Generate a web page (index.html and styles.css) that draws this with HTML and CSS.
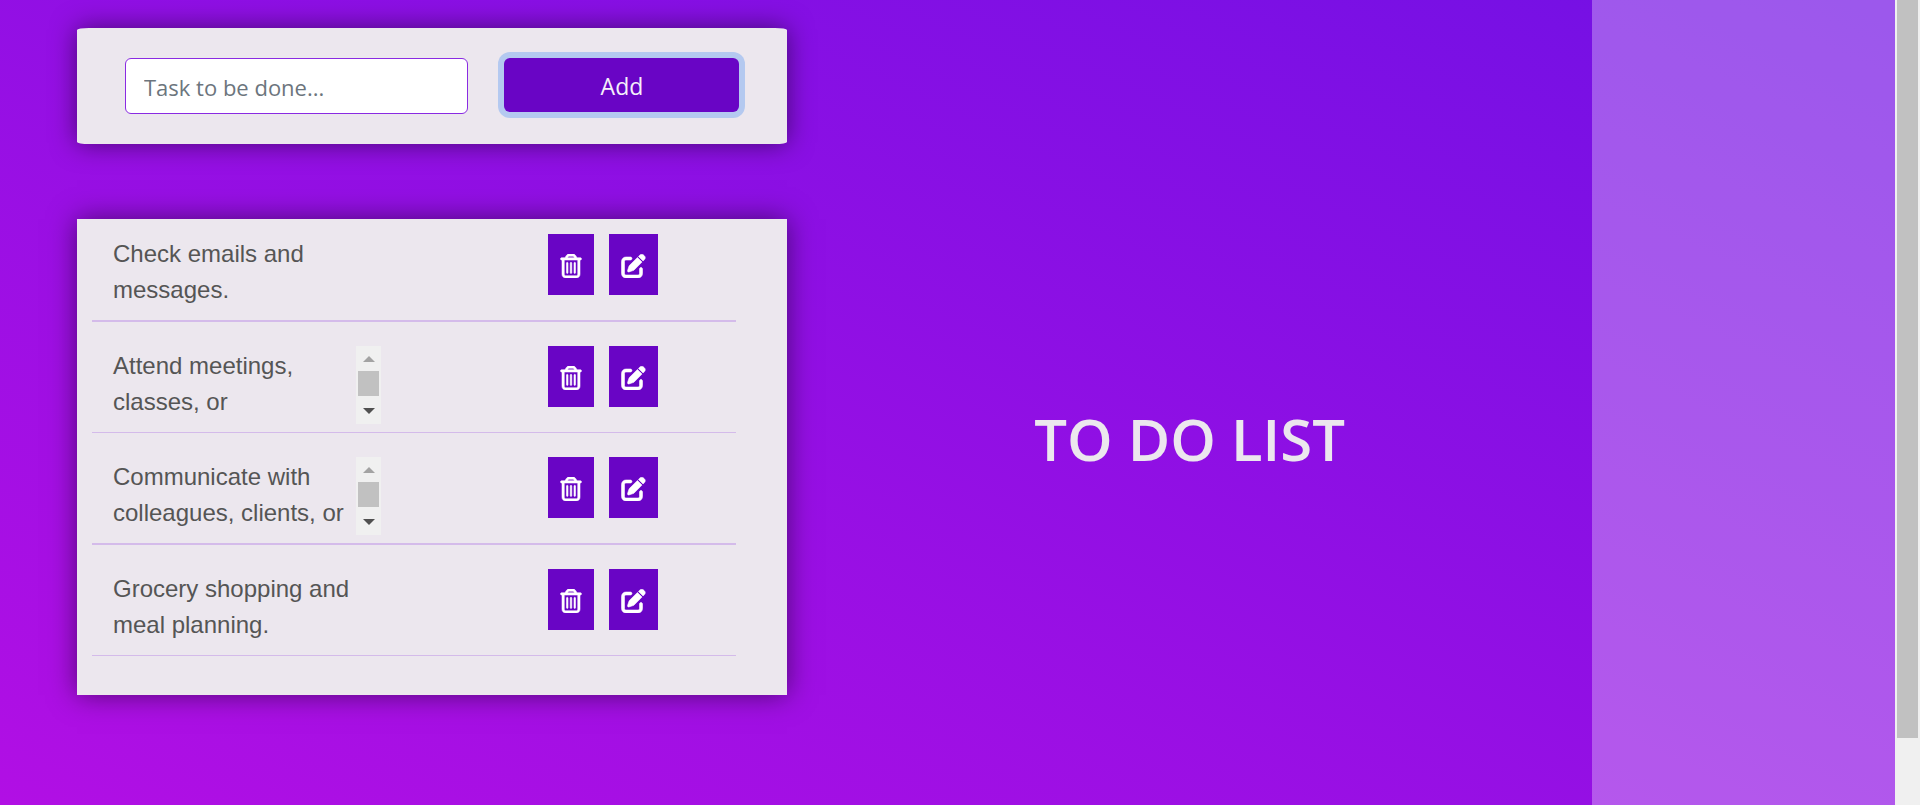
FILE: index.html
```html
<!DOCTYPE html>
<html lang="en">
<head>
<meta charset="utf-8">
<title>To Do List</title>
<link rel="stylesheet" href="styles.css">
</head>
<body>
<svg class="sprite" aria-hidden="true">
  <symbol id="trash" viewBox="0 0 448 512"><path d="M170.5 51.6L151.5 80h145l-19-28.4c-1.5-2.2-4-3.6-6.7-3.6H177.1c-2.7 0-5.2 1.3-6.7 3.6zm147-26.6L354.2 80H368h48 8c13.3 0 24 10.7 24 24s-10.7 24-24 24h-8V432c0 44.2-35.8 80-80 80H112c-44.2 0-80-35.8-80-80V128H24c-13.3 0-24-10.7-24-24S10.7 80 24 80h8H80 93.8l36.7-55.1C140.9 9.4 158.4 0 177.1 0h93.7c18.7 0 36.2 9.4 46.6 24.9zM80 128V432c0 17.7 14.3 32 32 32H336c17.7 0 32-14.3 32-32V128H80zm80 64V400c0 8.800-7.200 16-16 16s-16-7.200-16-16V192c0-8.800 7.200-16 16-16s16 7.200 16 16zm80 0V400c0 8.800-7.200 16-16 16s-16-7.200-16-16V192c0-8.800 7.200-16 16-16s16 7.200 16 16zm80 0V400c0 8.800-7.200 16-16 16s-16-7.200-16-16V192c0-8.800 7.200-16 16-16s16 7.200 16 16z"/></symbol>
  <symbol id="edit" viewBox="0 0 512 512"><path d="M471.6 21.7c-21.9-21.9-57.3-21.9-79.2 0L362.3 51.7l97.9 97.9 30.1-30.1c21.9-21.9 21.9-57.3 0-79.2L471.6 21.7zm-299.2 220c-6.1 6.1-10.8 13.600-13.500 21.900l-29.600 88.800c-2.900 8.600-.6 18.100 5.800 24.600s15.900 8.700 24.600 5.800l88.800-29.600c8.200-2.700 15.700-7.400 21.900-13.500L437.700 172.300 339.700 74.300 172.400 241.700zM96 64C43 64 0 107 0 160V416c0 53 43 96 96 96H352c53 0 96-43 96-96V320c0-17.700-14.300-32-32-32s-32 14.300-32 32v96c0 17.700-14.300 32-32 32H96c-17.700 0-32-14.300-32-32V160c0-17.700 14.300-32 32-32h96c17.700 0 32-14.300 32-32s-14.300-32-32-32H96z"/></symbol>
</svg>
<div class="window">
  <div class="page">
    <main class="main">
      <div class="board">
        <form class="card form">
          <input class="field" type="text" placeholder="Task to be done..." aria-label="Task to be done">
          <button class="add" type="button">Add</button>
        </form>
        <ul class="card tasks">
          <li class="task">
            <div class="text"><p class="label">Check emails and messages.</p></div>
            <button class="icon" type="button" aria-label="Delete"><svg class="trash"><use href="#trash"/></svg></button>
            <button class="icon" type="button" aria-label="Edit"><svg class="edit"><use href="#edit"/></svg></button>
          </li>
          <li class="task">
            <div class="text"><p class="label">Attend meetings, classes, or</p><div class="scroll"><i class="up"></i><i class="thumb"></i><i class="down"></i></div></div>
            <button class="icon" type="button" aria-label="Delete"><svg class="trash"><use href="#trash"/></svg></button>
            <button class="icon" type="button" aria-label="Edit"><svg class="edit"><use href="#edit"/></svg></button>
          </li>
          <li class="task">
            <div class="text"><p class="label">Communicate with colleagues, clients, or</p><div class="scroll"><i class="up"></i><i class="thumb"></i><i class="down"></i></div></div>
            <button class="icon" type="button" aria-label="Delete"><svg class="trash"><use href="#trash"/></svg></button>
            <button class="icon" type="button" aria-label="Edit"><svg class="edit"><use href="#edit"/></svg></button>
          </li>
          <li class="task">
            <div class="text"><p class="label">Grocery shopping and meal planning.</p></div>
            <button class="icon" type="button" aria-label="Delete"><svg class="trash"><use href="#trash"/></svg></button>
            <button class="icon" type="button" aria-label="Edit"><svg class="edit"><use href="#edit"/></svg></button>
          </li>
        </ul>
      </div>
      <h1 class="title">TO DO LIST</h1>
    </main>
    <aside class="side"></aside>
  </div>
  <div class="page-scroll"><div class="page-thumb"></div></div>
</div>
</body>
</html>
```
FILE: styles.css
```css
* { box-sizing: border-box; }
body { margin: 0; font-family: "Open Sans", "Noto Sans", sans-serif; }
button, input { font: inherit; }
.sprite { display: none; }
.window { display: flex; height: 100vh; overflow: hidden; }
.page {
  flex: 1;
  display: flex;
  height: 109vh;
  background: linear-gradient(to right top, #b40fe4, #7110e4);
}
.main { flex: 1; display: flex; padding-left: 77px; }
.board { flex: 0 0 46.9%; padding-top: 28px; }
.card {
  margin: 0;
  background: #ece7ee;
  box-shadow: 0 0 26px rgba(0, 0, 0, 0.5);
}
.form { display: flex; align-items: flex-start; gap: 36px; padding: 30px 48px; border-radius: 12px / 2px; }
.field {
  flex: 1;
  min-width: 0;
  height: 56px;
  padding: 2px 18px 0;
  border: 1px solid #8a2be2;
  border-radius: 6px;
  background: #fff;
  color: #495057;
  font-size: 22px;
}
.field::placeholder { color: #6c757d; opacity: 1; }
.add {
  flex: 0 0 235px;
  height: 54px;
  padding: 2px 0 0;
  border: 0;
  border-radius: 6px;
  background: #6905c5;
  color: #f5f0fa;
  font-size: 23px;
  box-shadow: 0 0 0 6px #b4c9f0;
}
.tasks { margin-top: 75px; padding: 15px 51px 39px 15px; list-style: none; }
.task {
  display: flex;
  align-items: flex-start;
  padding: 24px 0 8px;
  border-bottom: 1px solid #d4bbea;
}
.task:nth-child(odd) { border-bottom-width: 2px; }
.task:first-child { padding-top: 0; }
.text { display: flex; width: 289px; height: 78px; margin-right: 167px; padding-left: 21px; }
.label {
  width: 243px;
  margin: 0;
  padding: 2px 0;
  font: 24px/36px "Liberation Sans", Arial, sans-serif;
  color: #555;
}
.scroll {
  flex: 0 0 25px;
  display: flex;
  flex-direction: column;
  align-items: center;
  gap: 9px;
  padding-top: 10px;
  background: #f0f0f0;
}
.up, .down { border: 6px solid transparent; }
.up { border-top: 0; border-bottom-color: #a3a3a3; }
.down { margin-top: 3px; border-bottom: 0; border-top-color: #505050; }
.thumb { width: 21px; height: 25px; background: #c1c1c1; }
.icon {
  height: 61px;
  padding: 2px 12px 0;
  border: 0;
  background: #6905c5;
  color: #fff;
}
.icon + .icon { margin-left: 15px; }
.icon svg { display: block; height: 24px; fill: currentColor; stroke: currentColor; stroke-width: 12px; }
.icon .trash { width: 22px; }
.icon .edit { width: 25px; }
.title {
  flex: 1;
  align-self: center;
  margin: 0;
  text-align: center;
  font-size: 58px;
  font-weight: 600;
  line-height: 72px;
  color: #ece7ee;
}
.side { flex: 0 0 16%; background: rgba(255, 255, 255, 0.3); }
.page-scroll { flex: 0 0 25px; padding: 0 2px; background: #f0f0f0; }
.page-thumb { height: 738px; background: #c1c1c1; }
```
